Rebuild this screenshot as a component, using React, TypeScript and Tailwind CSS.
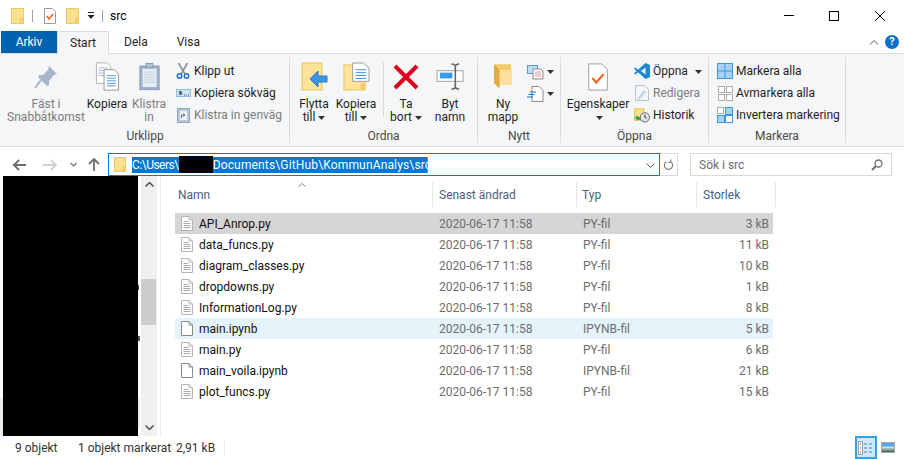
import type { ReactNode } from "react";

/* ── Small drawn icons ───────────────────────────────────────────────── */

function Folder({ className = "w-[13px] h-[16px]" }: { className?: string }) {
  return (
    <svg viewBox="0 0 13 16" className={className}>
      <rect x="0.5" y="0.5" width="12" height="15" fill="#fbe08f" stroke="#e9c867" />
      <rect x="9.5" y="10.5" width="3" height="5" fill="#f7d26c" stroke="#e9c867" />
    </svg>
  );
}

function DocLines({ muted = true }: { muted?: boolean }) {
  const c = "#a9a9a9";
  return (
    <svg viewBox="0 0 12 15" className="w-[12px] h-[15px]">
      <path d="M.5.5h7.5l3.5 3.5v10.5H.5z" fill="#fff" stroke={muted ? "#b5b5b5" : "#8a8a8a"} />
      <path d="M8 .5V4h3.5" fill="none" stroke={muted ? "#b5b5b5" : "#8a8a8a"} />
      {muted && <path d="M2.5 5.5h5M2.5 7.5h7M2.5 9.5h7M2.5 11.5h7" stroke={c} />}
    </svg>
  );
}

function Caret() {
  return <svg viewBox="0 0 7 4" className="inline-block w-[7px] h-[4px] ml-[3px] align-middle"><path d="M0 0h7L3.5 4z" fill="#333" /></svg>;
}

const PinIcon = () => (
  <svg viewBox="0 0 32 32" className="w-8 h-8">
    <path d="M19 5l8 8-3 1-5 6 0 4-2 1-9-9 1-2 4 0 5-5z" fill="#a8b6cb" />
    <path d="M11 19L5 27" stroke="#a8b6cb" strokeWidth="2" />
  </svg>
);
const CopyIcon = () => (
  <svg viewBox="0 0 28 34" className="w-[25px] h-[29px]">
    <path d="M1 1h12l5 5v19H1z" fill="#fff" stroke="#a8a8a8" />
    <path d="M3.5 7h11M3.5 10h11M3.5 13h11M3.5 16h11" stroke="#8cb4e4" />
    <path d="M10 9h12l5 5v19H10z" fill="#fff" stroke="#8a8a8a" />
    <path d="M13 16h11M13 19h11M13 22h11M13 25h11M13 28h11" stroke="#3f8ae0" />
  </svg>
);
const ClipboardIcon = () => (
  <svg viewBox="0 0 24 32" className="w-[21px] h-[29px]">
    <rect x="1" y="4" width="22" height="27" fill="#9fb3cc" stroke="#8096b3" />
    <rect x="4" y="7" width="16" height="21" fill="#e7ecf3" />
    <path d="M6 11h12M6 14h12M6 17h12M6 20h12M6 23h12" stroke="#c0cad9" />
    <rect x="8" y="1" width="8" height="5" fill="#b4c2d6" stroke="#8096b3" />
  </svg>
);
const ScissorsIcon = () => (
  <svg viewBox="0 0 14 16" className="w-[14px] h-[16px]">
    <path d="M2.5 0L9 11M11.5 0L5 11" stroke="#8b8f96" strokeWidth="1.6" fill="none" />
    <circle cx="3.5" cy="13" r="2.2" fill="none" stroke="#1e6fc4" strokeWidth="1.5" />
    <circle cx="10.5" cy="13" r="2.2" fill="none" stroke="#1e6fc4" strokeWidth="1.5" />
  </svg>
);
const PathIcon = () => (
  <svg viewBox="0 0 15 8" className="w-[15px] h-[8px]">
    <rect x="0.5" y="0.5" width="14" height="7" fill="#cfe5f8" stroke="#8fbde6" />
    <path d="M3 2l1 4 1-4 1 4M8 6h1M10 6h1M12 6h1" stroke="#333" strokeWidth="0.8" fill="none" />
  </svg>
);
const ShortcutPasteIcon = () => (
  <svg viewBox="0 0 13 16" className="w-[13px] h-[16px]">
    <rect x="0.5" y="1.5" width="12" height="14" fill="#b9c6d8" stroke="#93a5bc" />
    <rect x="3" y="4" width="7" height="9" fill="#eef1f5" />
    <path d="M4.5 11V8h3M6 6.5L8 8 6 9.5" stroke="#5d7391" fill="none" />
  </svg>
);
const MoveIcon = () => (
  <svg viewBox="0 0 27 29" className="w-[27px] h-[29px]">
    <rect x="1" y="1" width="20" height="27" fill="#fce39a" stroke="#e8c45f" />
    <path d="M26 14h-9V9l-8 8 8 8v-5h9z" fill="#3f95e6" stroke="#2a78c4" />
  </svg>
);
const CopyToIcon = () => (
  <svg viewBox="0 0 28 30" className="w-[27px] h-[29px]">
    <rect x="1" y="3" width="22" height="26" fill="#fce39a" stroke="#e8c45f" />
    <rect x="18" y="22" width="5" height="7" fill="#f4cc6c" />
    <path d="M10 1h11l6 5v14H10z" fill="#fff" stroke="#9a9a9a" />
    <path d="M13 8h11M13 11h11M13 14h11M13 17h11" stroke="#3f8ae0" />
  </svg>
);
const DeleteIcon = () => (
  <svg viewBox="0 0 26 26" className="w-[26px] h-[26px]">
    <path d="M2 2l22 22M24 2L2 24" stroke="#e0001b" strokeWidth="4" />
  </svg>
);
const RenameIcon = () => (
  <svg viewBox="0 0 30 28" className="w-[29px] h-[27px]">
    <rect x="1" y="8" width="27" height="11" fill="#fff" stroke="#a0a0a0" />
    <rect x="4" y="10" width="13" height="6" fill="#3a9ae6" />
    <path d="M16 1c4 0 4 2 4 3v20c0 1 0 3-4 3M24 1c-4 0-4 2-4 3M24 27c-4 0-4-2-4-3" stroke="#666" strokeWidth="1.6" fill="none" />
  </svg>
);
const NewFolderIcon = () => (
  <svg viewBox="0 0 20 28" className="w-[19px] h-[27px]">
    <path d="M0 1h18v22H6v-2H0z" fill="#f5cb67" />
    <path d="M0 1l6 6v20L0 21z" fill="#e3ab43" />
    <path d="M6 7h13v16H6z" fill="#fbe0a0" />
  </svg>
);
const NewItemIcon = () => (
  <svg viewBox="0 0 17 15" className="w-[17px] h-[15px]">
    <rect x="0.5" y="0.5" width="10" height="8" fill="#bcdcf7" stroke="#5a9ad8" />
    <path d="M6 4h8l2 2v8H6z" fill="#fff" stroke="#8a8a8a" />
    <path d="M8 7h6M8 9h6M8 11h6" stroke="#e79aa3" />
  </svg>
);
const EasyAccessIcon = () => (
  <svg viewBox="0 0 17 16" className="w-[17px] h-[16px]">
    <path d="M5 .5h7l4 4v11H5z" fill="#fff" stroke="#8a8a8a" />
    <path d="M3 6h6M1.500 8.500h6M0 11h6" stroke="#1d6fc2" />
  </svg>
);
const PropertiesIcon = () => (
  <svg viewBox="0 0 22 30" className="w-[22px] h-[28px]">
    <path d="M1 1h14l6 6v22H1z" fill="#fff" stroke="#9a9a9a" />
    <path d="M5 16l4 5 8-9" stroke="#f2601d" strokeWidth="2.2" fill="none" />
  </svg>
);
const VsCodeIcon = () => (
  <svg viewBox="0 0 16 16" className="w-[16px] h-[16px]">
    <path d="M11.500 0L16 2v12l-4.500 2L4 9.300 1.500 11.500 0 10.500 2.500 8 0 5.500l1.500-1L4 6.700z" fill="#1f86d6" />
    <path d="M11.500 4.500L7 8l4.500 3.500z" fill="#f5f6f7" />
  </svg>
);
const EditIcon = () => (
  <svg viewBox="0 0 14 16" className="w-[14px] h-[16px]">
    <path d="M.5.5h9l4 4v11H.5z" fill="#f3f5f8" stroke="#b8c3d2" />
    <path d="M2 14L9 5l2 2-7 8z" fill="#c2d5ea" />
  </svg>
);
const HistoryIcon = () => (
  <svg viewBox="0 0 17 15" className="w-[16px] h-[15px]">
    <rect x="0.500" y="0.500" width="10" height="12" fill="#fbe08f" stroke="#e2bd56" />
    <circle cx="11.500" cy="9.500" r="5" fill="#dfe2e6" stroke="#666" />
    <path d="M11.500 6.500v3l2 1" stroke="#333" fill="none" />
    <path d="M1 10l3-3v2h3v3H4v1z" fill="#2fa33a" />
  </svg>
);
function GridIcon({ mode }: { mode: "all" | "none" | "invert" }) {
  const filled = "#a8d2f5";
  const blue = "#3b97e0";
  const grey = "#ababab";
  const cell = (x: number, y: number, on: boolean) => (
    <rect x={x + 0.5} y={y + 0.5} width="6" height="6" fill={on ? filled : "#fff"} stroke={on ? blue : grey} />
  );
  return (
    <svg viewBox="0 0 16 16" className="w-[16px] h-[16px]">
      {mode === "all" && <rect x="0.500" y="0.500" width="15" height="15" fill={filled} stroke={blue} />}
      {mode === "all" && <path d="M8 0v16M0 8h16" stroke={blue} />}
      {mode === "none" && <>{cell(1, 1, false)}{cell(9, 1, false)}{cell(1, 9, false)}{cell(9, 9, false)}</>}
      {mode === "invert" && <>{cell(0, 0, false)}<rect x="8.500" y="0.500" width="7" height="7" fill={filled} stroke={blue} /><rect x="0.500" y="8.500" width="7" height="7" fill={filled} stroke={blue} /><rect x="8.500" y="8.500" width="7" height="7" fill="#fff" stroke={blue} /></>}
    </svg>
  );
}

/* ── Ribbon parts ────────────────────────────────────────────────────── */

function Big({ w, icon, lines, muted, caret }: { w: string; icon: ReactNode; lines: string[]; muted?: boolean; caret?: boolean }) {
  return (
    <div className={`${w} flex flex-col items-center shrink-0 ${muted ? "text-[#7d7d7d]" : "text-[#1f1f1f]"}`}>
      <div className="h-[33px] flex items-center justify-center">{icon}</div>
      <div className="mt-[5px] text-center leading-[13px] whitespace-nowrap">
        {lines.map((l, i) => (
          <div key={l} className="h-[13px]">
            {l}
            {caret && i === lines.length - 1 && <Caret />}
          </div>
        ))}
      </div>
    </div>
  );
}

function Small({ icon, label, muted, caret }: { icon: ReactNode; label: string; muted?: boolean; caret?: boolean }) {
  return (
    <div className={`h-[22px] flex items-center whitespace-nowrap ${muted ? "text-[#7d7d7d]" : "text-[#1f1f1f]"}`}>
      <span className="w-[19px] shrink-0 flex items-center justify-center pr-[3px]">{icon}</span>
      {label}
      {caret && <span className="ml-[4px]"><Caret /></span>}
    </div>
  );
}

function Group({ w, label, children, last }: { w: string; label: string; children: ReactNode; last?: boolean }) {
  return (
    <div className={`${w} shrink-0 h-[86px] flex flex-col ${last ? "" : "border-r border-[#dcdddf]"}`}>
      <div className="h-[74px] pt-[3px] flex">{children}</div>
      <div className="text-center text-[#4a4a4a] leading-[14px]">{label}</div>
    </div>
  );
}

/* ── File list data ──────────────────────────────────────────────────── */

type FileRow = { name: string; type: string; size: string; plain?: boolean; cls?: string };

const files: FileRow[] = [
  { name: "API_Anrop.py", type: "PY-fil", size: "3 kB", cls: "bg-[#d5d5d5]" },
  { name: "data_funcs.py", type: "PY-fil", size: "11 kB" },
  { name: "diagram_classes.py", type: "PY-fil", size: "10 kB" },
  { name: "dropdowns.py", type: "PY-fil", size: "1 kB" },
  { name: "InformationLog.py", type: "PY-fil", size: "8 kB" },
  { name: "main.ipynb", type: "IPYNB-fil", size: "5 kB", plain: true, cls: "bg-[#e5f3fb]" },
  { name: "main.py", type: "PY-fil", size: "6 kB" },
  { name: "main_voila.ipynb", type: "IPYNB-fil", size: "21 kB", plain: true },
  { name: "plot_funcs.py", type: "PY-fil", size: "15 kB" },
];

export default function App() {
  return (
    <div
      className="w-[904px] h-[459px] overflow-hidden bg-white text-[12px] text-[#1f1f1f] flex flex-col relative"
      style={{ fontFamily: "Roboto, 'Liberation Sans', sans-serif" }}
    >
      {/* Title bar */}
      <div className="h-[31px] shrink-0 flex items-center pl-[11px]">
        <Folder />
        <span className="ml-[8px] w-px h-[12px] bg-[#a0a0a0]" />
        <span className="ml-[11px]">
          <svg viewBox="0 0 12 16" className="w-[12px] h-[16px]">
            <path d="M.5.5h8l3 3v12H.5z" fill="#fff" stroke="#9a9a9a" />
            <path d="M3 8l2 3 4-5" stroke="#f2601d" strokeWidth="1.4" fill="none" />
          </svg>
        </span>
        <span className="ml-[10px]"><Folder /></span>
        <svg viewBox="0 0 8 7" className="ml-[8px] w-[8px] h-[7px]">
          <path d="M1 .5h6" stroke="#222" />
          <path d="M.5 3h7L4 7z" fill="#222" />
        </svg>
        <span className="ml-[7px] w-px h-[12px] bg-[#a0a0a0]" />
        <span className="ml-[7px] text-black">src</span>
        <div className="ml-auto flex items-center pr-[19px]">
          <span className="w-[10px] h-px bg-black mr-[35px]" />
          <span className="w-[10px] h-[10px] border border-black mr-[36px]" />
          <svg viewBox="0 0 10 10" className="w-[10px] h-[10px]"><path d="M0 0l10 10M10 0L0 10" stroke="#000" strokeWidth="1" /></svg>
        </div>
      </div>

      {/* Tabs */}
      <div className="h-[23px] shrink-0 flex items-stretch pl-[1px] border-b border-[#dadbdc] relative">
        <div className="w-[56px] bg-[#0063b1] text-white flex items-center justify-center">Arkiv</div>
        <div className="w-[52px] h-[23px] bg-[#f5f6f7] border-x border-t border-[#dadbdc] flex items-center justify-center">Start</div>
        <div className="ml-[15px] flex items-center">Dela</div>
        <div className="ml-[29px] flex items-center">Visa</div>
        <div className="ml-auto flex items-center pr-[5px] gap-[6px]">
          <svg viewBox="0 0 10 6" className="w-[10px] h-[6px]"><path d="M1 5.500l4-4 4 4" stroke="#9c9c9c" fill="none" strokeWidth="1.200" /></svg>
          <span className="w-[14px] h-[14px] rounded-full bg-[#0a70c9] text-white font-bold text-[11px] leading-[14px] text-center">?</span>
        </div>
      </div>

      {/* Ribbon */}
      <div className="h-[93px] shrink-0 bg-[#f5f6f7] border-b border-[#dadbdc] pl-[1px] pt-[3px] flex">
        <Group w="w-[289px]" label="Urklipp">
          <Big w="w-[80px] ml-[5px]" icon={<PinIcon />} lines={["Fäst i", "Snabbåtkomst"]} muted />
          <Big w="w-[42px]" icon={<CopyIcon />} lines={["Kopiera"]} />
          <Big w="w-[42px]" icon={<ClipboardIcon />} lines={["Klistra", "in"]} muted />
          <div className="ml-[5px]">
            <Small icon={<ScissorsIcon />} label="Klipp ut" />
            <Small icon={<PathIcon />} label="Kopiera sökväg" />
            <Small icon={<ShortcutPasteIcon />} label="Klistra in genväg" muted />
          </div>
        </Group>
        <Group w="w-[188px]" label="Ordna">
          <Big w="w-[38px] ml-[5px]" icon={<MoveIcon />} lines={["Flytta", "till"]} caret />
          <Big w="w-[46px]" icon={<CopyToIcon />} lines={["Kopiera", "till"]} caret />
          <span className="ml-[4px] w-px h-[55px] mt-[2px] bg-[#dcdddf]" />
          <Big w="w-[44px]" icon={<DeleteIcon />} lines={["Ta", "bort"]} caret />
          <Big w="w-[44px]" icon={<RenameIcon />} lines={["Byt", "namn"]} />
        </Group>
        <Group w="w-[83px]" label="Nytt">
          <Big w="w-[36px] ml-[7px]" icon={<NewFolderIcon />} lines={["Ny", "mapp"]} />
          <div className="ml-[6px] pt-[4px] flex flex-col gap-[6px]">
            <div className="flex items-center h-[16px]"><NewItemIcon /><Caret /></div>
            <div className="flex items-center h-[16px]"><EasyAccessIcon /><Caret /></div>
          </div>
        </Group>
        <Group w="w-[148px]" label="Öppna">
          <Big w="w-[62px] ml-[6px]" icon={<PropertiesIcon />} lines={["Egenskaper", ""]} caret />
          <div className="ml-[5px]">
            <Small icon={<VsCodeIcon />} label="Öppna" caret />
            <Small icon={<EditIcon />} label="Redigera" muted />
            <Small icon={<HistoryIcon />} label="Historik" />
          </div>
        </Group>
        <Group w="w-[137px]" label="Markera">
          <div className="ml-[8px]">
            <Small icon={<GridIcon mode="all" />} label="Markera alla" />
            <Small icon={<GridIcon mode="none" />} label="Avmarkera alla" />
            <Small icon={<GridIcon mode="invert" />} label="Invertera markering" />
          </div>
        </Group>
      </div>

      {/* Address bar */}
      <div className="h-[29px] shrink-0 pt-[6px] pl-[13px]">
        <div className="h-[23px] flex items-center">
          <svg viewBox="0 0 14 12" className="w-[14px] h-[12px]"><path d="M0 6h13M6 1L1 6l5 5" stroke="#6f6f6f" strokeWidth="1.800" fill="none" /></svg>
          <svg viewBox="0 0 14 12" className="ml-[16px] w-[14px] h-[12px]"><path d="M0 6h13M8 1l5 5-5 5" stroke="#d0d0d0" strokeWidth="1.800" fill="none" /></svg>
          <svg viewBox="0 0 7 5" className="ml-[13px] w-[7px] h-[5px]"><path d="M.5 1L3.500 4l3-3" stroke="#6f6f6f" fill="none" strokeWidth="1.200" /></svg>
          <svg viewBox="0 0 12 13" className="ml-[11px] w-[12px] h-[13px]"><path d="M6 13V1M1 6l5-5 5 5" stroke="#6f6f6f" strokeWidth="1.800" fill="none" /></svg>
          <div className="ml-[8px] w-[552px] h-[23px] border border-[#0078d7] flex items-center pl-[5px] relative">
            <Folder className="w-[12px] h-[15px]" />
            <span className="ml-[6px] bg-[#0078d7] text-white leading-[16px] w-[296px] whitespace-nowrap border-r border-[#e0702a]">
              <span className="tracking-[-0.5px]">C:\Users\</span>
              <span className="inline-block w-[34px]" />
              <span className="tracking-[0.15px]">Documents\GitHub\KommunAnalys\src</span>
            </span>
            <span className="absolute left-[70px] top-[2px] w-[34px] h-[17px] bg-black" />
            <svg viewBox="0 0 9 5" className="absolute right-[4px] top-[9px] w-[9px] h-[5px]"><path d="M.5.5l4 4 4-4" stroke="#555" fill="none" /></svg>
          </div>
          <div className="w-[18px] h-[23px] border-y border-r border-[#d9d9d9] flex items-center justify-center">
            <svg viewBox="0 0 12 12" className="w-[11px] h-[12px]"><path d="M8.500 2.500a4.500 4.500 0 1 1-5 0M8.500 0v3h-3" stroke="#767676" fill="none" strokeWidth="1.200" /></svg>
          </div>
          <div className="ml-[12px] w-[202px] h-[23px] border border-[#d9d9d9] flex items-center pl-[8px] text-[#6d6d6d] relative">
            Sök i src
            <svg viewBox="0 0 12 12" className="absolute right-[8px] top-[5px] w-[12px] h-[12px]"><circle cx="7.500" cy="4.500" r="3.500" fill="none" stroke="#6f6f6f" strokeWidth="1.300" /><path d="M5 7l-4 4" stroke="#6f6f6f" strokeWidth="2" /></svg>
          </div>
        </div>
      </div>

      {/* Body */}
      <div className="flex-1 flex min-h-0">
        {/* Navigation pane, its names are blacked out in the reference */}
        <div className="w-[141px] shrink-0" />
        <div className="w-[16px] shrink-0 bg-[#f0f0f0] flex flex-col items-center justify-between py-[6px] relative">
          <svg viewBox="0 0 9 5" className="w-[9px] h-[5px]"><path d="M.5 4.500l4-4 4 4" stroke="#505050" fill="none" strokeWidth="1.500" /></svg>
          <span className="absolute top-[103px] left-0 w-[15px] h-[46px] bg-[#cdcdcd]" />
          <svg viewBox="0 0 9 5" className="w-[9px] h-[5px]"><path d="M.5.5l4 4 4-4" stroke="#505050" fill="none" strokeWidth="1.500" /></svg>
        </div>
        <div className="w-px bg-[#ececec] ml-[3px]" />

        {/* Details view */}
        <div className="flex-1 pl-[14px] min-w-0">
          <div className="h-[37px] flex pt-[6px] relative text-[#4c607a]">
            <svg viewBox="0 0 8 4" className="absolute left-[123px] top-[7px] w-[8px] h-[4px]"><path d="M.5 3.500L4 .5l3.500 3" stroke="#8a8a8a" fill="none" /></svg>
            <div className="w-[258px] h-[25px] pl-[3px] flex items-center border-r border-[#e5e5e5]">Namn</div>
            <div className="w-[144px] h-[25px] pl-[6px] flex items-center border-r border-[#e5e5e5]">Senast ändrad</div>
            <div className="w-[120px] h-[25px] pl-[5px] flex items-center border-r border-[#e5e5e5]">Typ</div>
            <div className="w-[79px] h-[25px] pl-[6px] flex items-center border-r border-[#e5e5e5]">Storlek</div>
          </div>
          <div className="w-[598px] flex flex-col">
            {files.map((f) => (
              <div key={f.name} className={`h-[21px] flex items-center ${f.cls ?? ""}`}>
                <span className="w-[24px] pl-[6px] shrink-0 flex items-center"><DocLines muted={!f.plain} /></span>
                <span className="w-[240px] shrink-0 text-[#111]">{f.name}</span>
                <span className="w-[144px] shrink-0 text-[#6d6d6d]">2020-06-17 11:58</span>
                <span className="w-[120px] shrink-0 text-[#6d6d6d]">{f.type}</span>
                <span className="w-[66px] shrink-0 text-right text-[#6d6d6d]">{f.size}</span>
              </div>
            ))}
          </div>
        </div>
      </div>

      {/* Status bar */}
      <div className="h-[23px] shrink-0 flex items-center text-[#333]">
        <span className="ml-[15px] w-[63px]">9 objekt</span>
        <span className="w-[98px]">1 objekt markerat</span>
        <span>2,91 kB</span>
        <span className="ml-[9px] w-px h-[15px] bg-[#ececec]" />
        <div className="ml-auto flex items-center pr-[9px]">
          <div className="w-[22px] h-[23px] bg-[#cce8ff] border-2 border-[#3a9fdd] flex items-center justify-center">
            <svg viewBox="0 0 16 14" className="w-[16px] h-[14px]">
              <rect x="0.500" y="0.500" width="4" height="13" fill="#fff" stroke="#a0a0a0" />
              <path d="M6 3h3M11 3h3M6 7h3M11 7h3M6 11h3M11 11h3" stroke="#777" />
              <path d="M2 3h1M2 7h1" stroke="#555" />
              <path d="M2 11h1" stroke="#d0342c" />
            </svg>
          </div>
          <div className="ml-[4px] w-[14px] h-[11px] border border-[#a5a5a5] bg-[linear-gradient(#5aa6ee_30%,#cfe3d8_50%,#3f5d56_100%)]" />
        </div>
      </div>

      {/* Redactions that lie over the navigation pane, with the scraps of names they leave */}
      <span className="absolute left-[3px] top-[176px] w-[135px] h-[260px] bg-black" />
      <span className="absolute left-[138px] top-[285px] w-px h-[5px] bg-[#444]" />
      <span className="absolute left-[138px] top-[336px] w-[2px] h-[5px] bg-[#555]" />
      <span className="absolute left-0 top-[398px] w-[3px] h-[38px] bg-[#ececec]" />
      <span className="absolute left-[138px] top-[398px] w-[2px] h-[30px] bg-[#ececec]" />
    </div>
  );
}
